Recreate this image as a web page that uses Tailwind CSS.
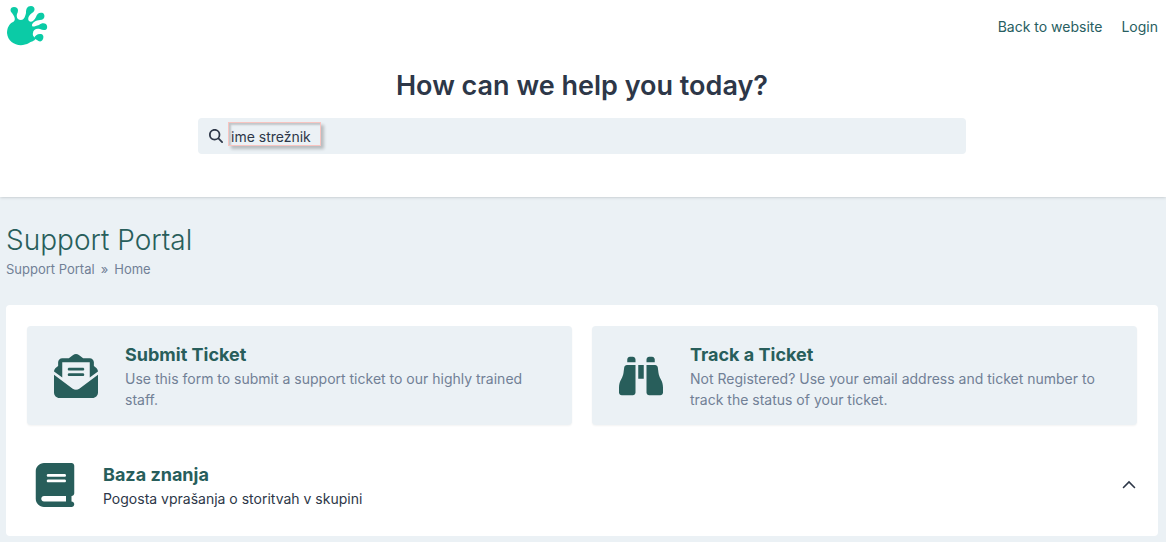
<!DOCTYPE html>
<html lang="en">
<head>
    <meta charset="UTF-8">
    <meta name="viewport" content="width=device-width, initial-scale=1.0">
    <title>Support Portal</title>
    <script src="https://cdn.jsdelivr.net/npm/@tailwindcss/browser@4"></script>
</head>
<body class="bg-[#ebf1f5] min-h-screen font-['Inter',sans-serif] text-sm leading-[21px] text-[#2d3748]">
    <!-- Header -->
    <header class="bg-white pl-1.5 pr-2 pt-1.5 pb-[43px] shadow">
        <nav class="flex justify-between items-center h-10">
            <a href="#" aria-label="Home">
                <svg class="w-[42px] h-[42px]" viewBox="0 0 42 42" fill="#0bcba6">
                    <path d="M1 28C1 23 3 19 7 17C10 15 9 12 6 8C3 5 5 2 8 2C12 2 13 5 11 9C10 13 12 15 15 15C18 15 19 12 20 8C20 4 21 1 25 1C29 1 30 6 26 8C23 10 21 14 23 16C25 18 28 16 30 12C31 8 34 7 37 8C40 11 38 15 34 15C30 15 26 18 26 20C26 23 29 21 33 20C36 17 41 18 41 21C42 25 38 26 34 24C30 23 27 25 27 28C26 31 29 32 29 34C29 36 26 36 23 38C14 43 2 39 1 28Z"/>
                    <path d="M28 33C29 31 31 29 34 29C37 29 38 31 37 34C36 37 33 37 31 35C30 34 28 35 28 33Z"/>
                </svg>
            </a>
            <div class="flex gap-[19px] text-[#285e61]">
                <a href="#">Back to website</a>
                <a href="#">Login</a>
            </div>
        </nav>
        <div class="max-w-3xl mx-auto mt-6">
            <h1 class="text-center text-[27px] leading-8 font-semibold">How can we help you today?</h1>
            <form class="relative mt-4 flex items-center h-9 rounded bg-[#ebf1f5] pl-[11px]">
                <label for="search" aria-label="Search">
                    <svg class="w-3.5 h-3.5" viewBox="0 0 512 512" fill="currentColor"><path d="M416 208c0 45.9-14.9 88.3-40 122.7L502.6 457.4c12.5 12.5 12.5 32.8 0 45.3s-32.8 12.5-45.3 0L330.7 376c-34.4 25.2-76.8 40-122.7 40C93.1 416 0 322.9 0 208S93.1 0 208 0S416 93.1 416 208zM208 352a144 144 0 1 0 0-288 144 144 0 1 0 0 288z"/></svg>
                </label>
                <input id="search" type="text" value="ime strežnik" class="grow ml-2 bg-transparent outline-none">
                <!-- Highlight over the search term -->
                <span class="absolute left-[30px] top-1 w-[93px] h-6 border border-[#f8c4c0] shadow-[3px_3px_3px_rgba(0,0,0,0.22),inset_2px_2px_2px_rgba(0,0,0,0.18)] pointer-events-none"></span>
            </form>
        </div>
    </header>

    <main class="pl-1.5 pr-2 pt-6">
        <h2 class="text-[28px] leading-[38px] font-light text-[#285e5b]">Support Portal</h2>
        <nav class="flex gap-1.5 text-[13px] leading-5 text-[#718096]">
            <a href="#">Support Portal</a>
            <span>»</span>
            <a href="#">Home</a>
        </nav>

        <section class="mt-[26px] bg-white rounded p-[21px] pb-[27px]">
            <div class="grid grid-cols-2 gap-5">
                <a href="#" class="flex items-center bg-[#ebf1f5] rounded shadow-xs pl-[27px] pr-7 py-[15px]">
                    <svg class="w-11 h-11 mr-[27px] shrink-0" viewBox="0 0 512 512" fill="#285e5b"><path d="M215.4 96L144 96l-36.2 0L96 96l0 8.8L96 144l0 40.4 0 89L.2 202.5c1.6-18.1 10.9-34.9 25.7-45.8L48 140.3 48 96c0-26.5 21.5-48 48-48l76.6 0 49.9-36.9C232.2 3.9 243.9 0 256 0s23.8 3.9 33.5 11L339.4 48 416 48c26.5 0 48 21.5 48 48l0 44.3 22.1 16.4c14.8 10.9 24.1 27.7 25.7 45.8L416 273.4l0-89 0-40.4 0-39.2 0-8.8-11.8 0L368 96l-71.4 0-81.3 0zM0 448L0 242.1 217.6 403.3c11.1 8.2 24.6 12.7 38.4 12.7s27.3-4.4 38.4-12.7L512 242.1 512 448s0 0 0 0c0 35.3-28.7 64-64 64L64 512c-35.3 0-64-28.7-64-64c0 0 0 0 0 0zM176 160l160 0c8.8 0 16 7.2 16 16s-7.2 16-16 16l-160 0c-8.8 0-16-7.2-16-16s7.2-16 16-16zm0 64l160 0c8.8 0 16 7.2 16 16s-7.2 16-16 16l-160 0c-8.8 0-16-7.2-16-16s7.2-16 16-16z"/></svg>
                    <div>
                        <h3 class="text-lg leading-[27px] font-bold text-[#285e5b]">Submit Ticket</h3>
                        <p class="text-[#718096]">Use this form to submit a support ticket to our highly trained staff.</p>
                    </div>
                </a>
                <a href="#" class="flex items-center bg-[#ebf1f5] rounded shadow-xs pl-[27px] pr-7 py-[15px]">
                    <svg class="w-11 h-11 mr-[27px] shrink-0" viewBox="0 0 512 512" fill="#285e5b"><path d="M128 32l32 0c17.7 0 32 14.3 32 32l0 32L96 96l0-32c0-17.7 14.3-32 32-32zm64 96l0 320c0 17.7-14.3 32-32 32L32 480c-17.7 0-32-14.3-32-32l0-59.1c0-34.6 9.4-68.6 27.2-98.3C40.9 267.8 49.7 242.4 53 216L60.5 156c2-16 15.6-28 31.8-28l99.8 0zm227.8 0c16.1 0 29.8 12 31.8 28L459 216c3.3 26.4 12.1 51.8 25.8 74.6c17.8 29.7 27.2 63.7 27.2 98.3l0 59.1c0 17.7-14.3 32-32 32l-128 0c-17.7 0-32-14.3-32-32l0-320 99.8 0zM320 64c0-17.7 14.3-32 32-32l32 0c17.7 0 32 14.3 32 32l0 32-96 0 0-32zm-32 64l0 160-64 0 0-160 64 0z"/></svg>
                    <div>
                        <h3 class="text-lg leading-[27px] font-bold text-[#285e5b]">Track a Ticket</h3>
                        <p class="text-[#718096]">Not Registered? Use your email address and ticket number to track the status of your ticket.</p>
                    </div>
                </a>
            </div>

            <!-- Knowledge base -->
            <div class="flex items-center mt-9 pl-2">
                <svg class="w-10 h-11 mr-7 shrink-0" viewBox="0 0 448 512" fill="#285e5b"><path d="M96 0C43 0 0 43 0 96L0 416c0 53 43 96 96 96l288 0 32 0c17.7 0 32-14.3 32-32s-14.3-32-32-32l0-64c17.7 0 32-14.3 32-32l0-320c0-17.7-14.3-32-32-32L384 0 96 0zm0 384l256 0 0 64L96 448c-17.7 0-32-14.3-32-32s14.3-32 32-32zm32-240c0-8.8 7.2-16 16-16l192 0c8.8 0 16 7.2 16 16s-7.2 16-16 16l-192 0c-8.8 0-16-7.2-16-16zm16 48l192 0c8.8 0 16 7.2 16 16s-7.2 16-16 16l-192 0c-8.8 0-16-7.2-16-16s7.2-16 16-16z"/></svg>
                <div class="grow">
                    <h3 class="text-lg leading-[27px] font-bold text-[#285e5b]">Baza znanja</h3>
                    <p>Pogosta vprašanja o storitvah v skupini</p>
                </div>
                <button type="button" aria-label="Collapse" class="mr-px">
                    <svg class="w-3.5 h-3.5" viewBox="0 0 14 14" fill="none" stroke="currentColor" stroke-width="1.6" stroke-linecap="round"><path d="M1.5 9.5L7 4L12.5 9.5"/></svg>
                </button>
            </div>
        </section>
    </main>
</body>
</html>
